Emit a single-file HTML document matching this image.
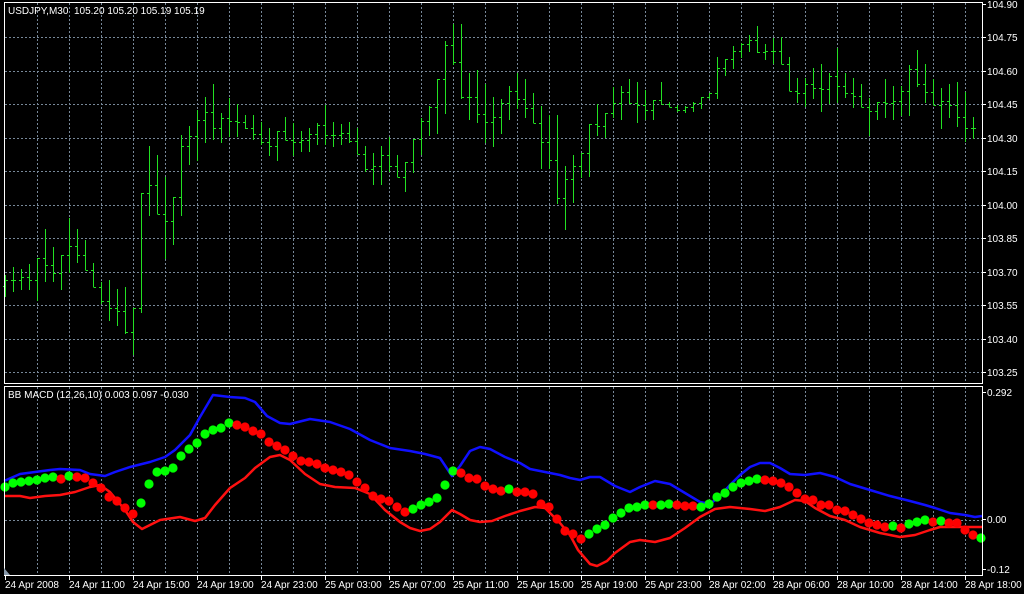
<!DOCTYPE html>
<html><head><meta charset="utf-8"><style>
html,body{margin:0;padding:0;background:#000;width:1024px;height:594px;overflow:hidden}
svg{position:absolute;left:0;top:0}
text{font-family:"Liberation Sans",sans-serif;font-size:10px;fill:#fff;white-space:pre}
</style></head><body>
<svg id="s" width="1024" height="594" viewBox="0 0 1024 594">
<g id="grid" stroke="#778899" stroke-width="1" stroke-dasharray="2,2" fill="none"></g>
<g id="bars" stroke="#22e022" stroke-width="1" fill="none"></g>
<polyline fill="none" stroke="#1010ff" stroke-width="2.5" stroke-linejoin="round" points="4,481 20,474 50,470 60,469 80,470 90,474 105,476 115,472 130,467 150,462 165,457 175,450 190,435 200,417 213,395 230,397 245,398 255,402 267,416 280,423 290,424 310,419 330,422 350,429 370,440 390,448 410,451 425,454 440,458 452,476 460,466 470,451 480,447 490,449 505,457 520,463 530,469 545,472 560,475 570,478 580,480 590,477 600,477 615,486 630,492 640,487 655,481 670,484 685,493 700,502 710,504 720,496 730,485 740,475 750,467 760,463 770,463 780,468 790,474 805,475 820,473 835,477 850,484 870,490 890,496 910,501 925,505 935,508 950,513 965,515 975,517 982,516"/>
<polyline fill="none" stroke="#ff1010" stroke-width="2.5" stroke-linejoin="round" points="4,496 20,496 30,498 45,496 60,495 75,492 90,487 100,485 110,492 125,510 133,522 142,529 150,525 160,520 180,517 195,521 205,518 215,505 230,488 245,478 255,468 270,457 280,455 290,460 305,474 320,484 335,487 355,488 370,494 385,510 400,522 410,528 420,531 430,529 440,522 452,510 460,514 470,520 480,522 492,521 505,516 520,511 535,507 545,508 560,523 570,535 578,550 590,564 597,566 607,561 615,553 630,542 640,540 655,542 670,538 685,528 700,517 715,509 730,507 750,509 765,511 780,507 795,500 805,501 815,508 830,516 845,520 860,527 880,533 900,537 915,535 930,530 940,527 960,527 982,527"/>
<g id="dots"></g>
<g stroke="#fff" stroke-width="1" fill="none">
<path d="M4.5,2.5 H982.5 V383.5 H4.5 Z"/>
<path d="M4.5,386.5 H982.5 V575.5 H4.5 Z"/>
</g>
<path d="M4,575 L4,568 L10,575 Z" fill="#8899aa"/>
<g id="ticks" stroke="#fff" stroke-width="1"></g>
<text x="8" y="14">USDJPY,M30  105.20 105.20 105.19 105.19</text>
<text x="8" y="398">BB MACD (12,26,10) 0.003 0.097 -0.030</text>
<g id="plab"></g>
<text x="987" y="396">0.292</text>
<text x="987" y="523">0.00</text>
<text x="987" y="573">-0.12</text>
<g id="tlab"></g>
</svg>
<script>
var NS="http://www.w3.org/2000/svg";
function el(p,t,a,txt){var e=document.createElementNS(NS,t);for(var k in a)e.setAttribute(k,a[k]);if(txt)e.textContent=txt;document.getElementById(p).appendChild(e);}
var g="";
for(var x=37;x<982;x+=32){g+="M"+(x+.5)+",3V383M"+(x+.5)+",387V575";}
for(var i=1;i<12;i++){var y=Math.round(4+33.45*i)+.5;g+="M5,"+y+"H982";}
g+="M5,520.5H982";
el("grid","path",{d:g});
var pr=["104.90","104.75","104.60","104.45","104.30","104.15","104.00","103.85","103.70","103.55","103.40","103.25"];
var tk="";
for(var i=0;i<12;i++){var y=Math.round(4+33.45*i);el("plab","text",{x:987,y:y+4},pr[i]);tk+="M983,"+(y+.5)+"H986";}
tk+="M983,392.5H986M983,519.5H986M983,569.5H986";
var tl=["24 Apr 2008","24 Apr 11:00","24 Apr 15:00","24 Apr 19:00","24 Apr 23:00","25 Apr 03:00","25 Apr 07:00","25 Apr 11:00","25 Apr 15:00","25 Apr 19:00","25 Apr 23:00","28 Apr 02:00","28 Apr 06:00","28 Apr 10:00","28 Apr 14:00","28 Apr 18:00"];
for(var i=0;i<16;i++){var x=5+64*i;el("tlab","text",{x:x,y:588},tl[i]);tk+="M"+(x+.5)+",576V580";}
el("ticks","path",{d:tk});
var B=[[275,297],[267,292],[269,290],[264,290],[258,301],[229,282],[247,282],[255,290],[218,273],[229,263],[240,270],[263,287],[282,304],[280,321],[289,326],[287,334],[308,355],[193,313],[146,216],[155,214],[177,259],[197,245],[135,216],[126,165],[110,161],[97,143],[84,140],[113,143],[98,137],[104,137],[115,129],[115,140],[122,145],[128,156],[131,161],[117,140],[123,156],[131,152],[128,152],[123,145],[105,145],[122,147],
[124,145],[122,143],[128,154],[146,172],[153,185],[146,185],[137,172],[155,177],[162,192],[139,173],[118,155],[106,136],[79,134],[41,114],[24,65],[24,99],[73,120],[70,123],[84,143],[97,147],[99,134],[86,120],[73,109],[79,118],[93,123],[106,169],[115,169],[115,204],[166,230],[155,203],[153,178],[124,177],[104,136],[113,138],[87,118],[86,120],[79,104],[82,123],[90,120],[100,120],[82,104],
[102,107],[105,112],[106,113],[102,112],[97,109],[93,99],[57,99],[59,76],[46,69],[43,58],[35,52],[26,53],[44,60],[38,64],[37,64],[57,91],[78,103],[78,107],[68,99],[64,112],[73,104],[48,103],[73,98],[78,108],[84,107],[98,136],[102,120],[79,118],[86,120],[86,116],[65,116],[50,87],[64,103],[79,105],[88,129],[84,118],[82,127],[92,142],[117,139]];
var d="",prev=null;
for(var i=0;i<B.length;i++){var x=5+8*i+.5,h=B[i][0],l=B[i][1];
var nx=B[i+1]||B[i];var c=Math.round(Math.min(l,Math.max(h,(nx[0]+nx[1])/2)));
var o=prev==null?Math.round((h+l)/2):Math.min(l,Math.max(h,prev));
d+="M"+x+","+h+"V"+l+"M"+(x-2.5)+","+(o+.5)+"H"+x+"M"+x+","+(c+.5)+"H"+(x+2.5);prev=c;}
el("bars","path",{d:d});
var D="487g483g482g481g480g478g477g479r476g477r478r483r488r497r501r508r514r503g484g472g471g468g456g449g443g434g430g428g423g425r427r431r434r442r446r450r456r461r462r464r468r470r472r475r482r488r496r499r501r507r512r509g505g502g498g485g471g473r478r479r486r489r491r489g492r492r494r504r507r519r531r534r539r534g529g525g518g513g508g507g505g505r505g504g505r506r506r507g504g497g493g487g483g481g479g480r481r483r487r493r499r500r505r505r510r511r515r519r523r525r527r526g528r524g522g520g522r521g523r523r530r535r538g";
var m=D.match(/\d+[gr]/g);
for(var i=0;i<m.length;i++){var y=parseInt(m[i]),col=m[i].slice(-1)=="g"?"#00ff00":"#ff0000";el("dots","circle",{cx:5+8*i,cy:y,r:4.6,fill:col});}
</script>
</body></html>
